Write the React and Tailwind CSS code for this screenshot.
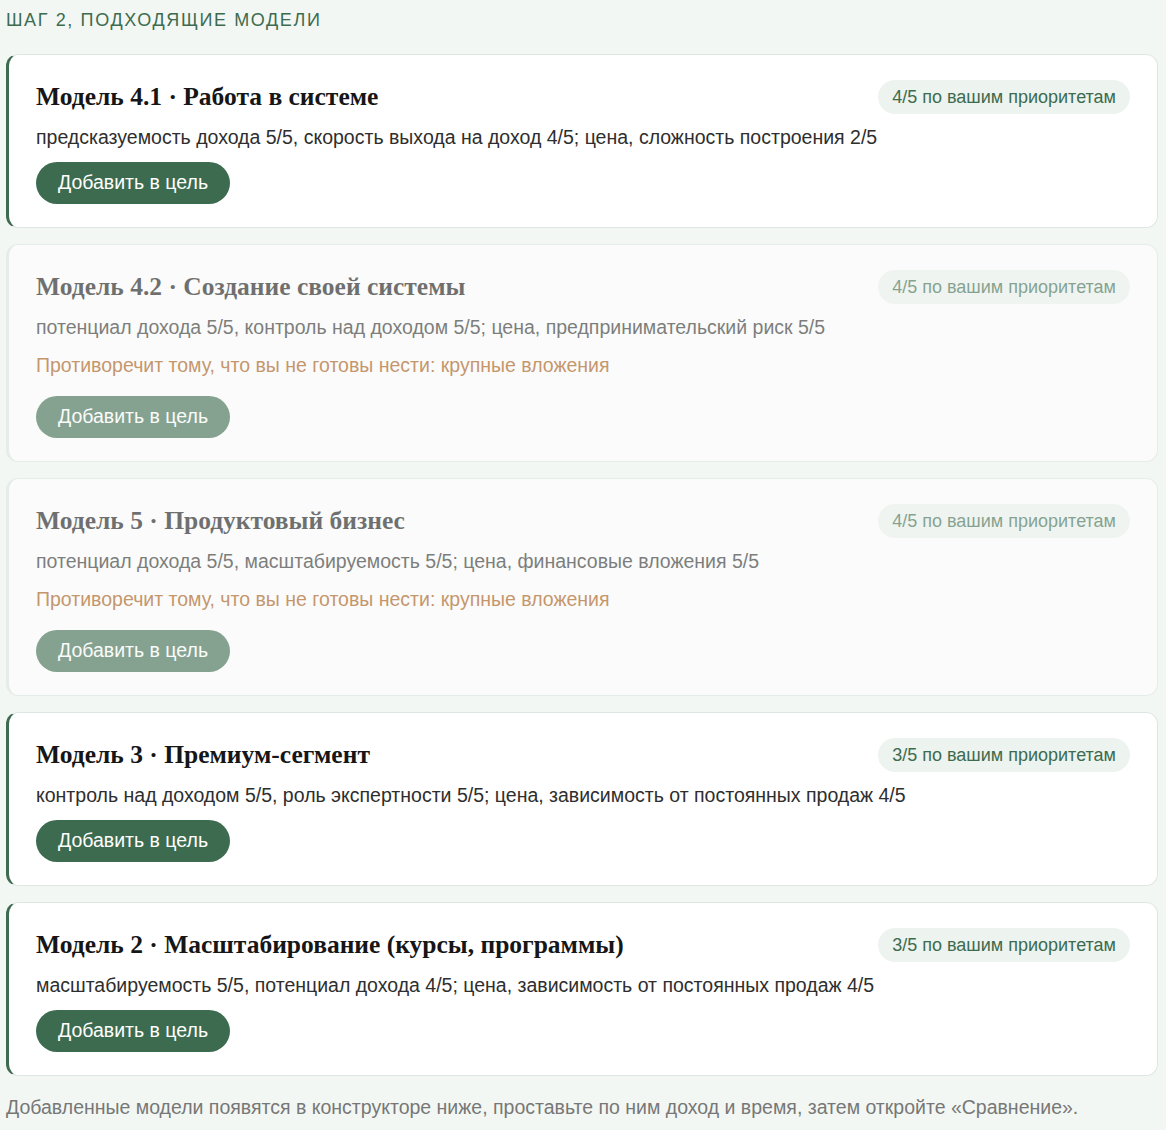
const models = [
  {
    id: '4.1',
    title: 'Модель 4.1 · Работа в системе',
    score: '4/5 по вашим приоритетам',
    summary:
      'предсказуемость дохода 5/5, скорость выхода на доход 4/5; цена, сложность построения 2/5',
  },
  {
    id: '4.2',
    title: 'Модель 4.2 · Создание своей системы',
    score: '4/5 по вашим приоритетам',
    summary:
      'потенциал дохода 5/5, контроль над доходом 5/5; цена, предпринимательский риск 5/5',
    conflict: 'Противоречит тому, что вы не готовы нести: крупные вложения',
  },
  {
    id: '5',
    title: 'Модель 5 · Продуктовый бизнес',
    score: '4/5 по вашим приоритетам',
    summary:
      'потенциал дохода 5/5, масштабируемость 5/5; цена, финансовые вложения 5/5',
    conflict: 'Противоречит тому, что вы не готовы нести: крупные вложения',
  },
  {
    id: '3',
    title: 'Модель 3 · Премиум-сегмент',
    score: '3/5 по вашим приоритетам',
    summary:
      'контроль над доходом 5/5, роль экспертности 5/5; цена, зависимость от постоянных продаж 4/5',
  },
  {
    id: '2',
    title: 'Модель 2 · Масштабирование (курсы, программы)',
    score: '3/5 по вашим приоритетам',
    summary:
      'масштабируемость 5/5, потенциал дохода 4/5; цена, зависимость от постоянных продаж 4/5',
  },
]

const ModelCard = ({ model }) => {
  const dimmed = Boolean(model.conflict)
  return (
    <div
      className={
        dimmed
          ? 'rounded-xl border border-l-[3px] border-[#dfe6e1] bg-white pl-[27px] pr-[27px] pt-[25px] pb-[23px] opacity-60'
          : 'rounded-xl border border-l-[3px] border-[#dfe6e1] border-l-[#3d6b4f] bg-white pl-[27px] pr-[27px] pt-[25px] pb-[23px]'
      }
    >
      <div className="flex h-[34px] items-center justify-between gap-4">
        <h3
          className="text-[25.5px] font-bold leading-[32px] text-[#161616]"
          style={{ fontFamily: '"Liberation Serif", "Times New Roman", serif' }}
        >
          {model.title}
        </h3>
        <span className="rounded-full bg-[#edf3ee] px-[14px] py-[6px] text-[18px] leading-[22px] text-[#3d6b4f]">
          {model.score}
        </span>
      </div>
      <p className="mt-[10px] text-[19.5px] leading-[26px] text-[#2e2e2e]">
        {model.summary}
      </p>
      {model.conflict && (
        <p className="mt-3 text-[19.5px] leading-[26px] text-[#a8560f]">
          {model.conflict}
        </p>
      )}
      <button
        type="button"
        className={`${dimmed ? 'mt-[18px]' : 'mt-3'} h-[42px] rounded-full bg-[#3d6b4f] px-[22px] text-[19.5px] text-white`}
      >
        Добавить в цель
      </button>
    </div>
  )
}

const App = () => {
  return (
    <div
      className="min-h-[1130px] bg-[#f3f7f4] pl-[6px] pr-[8px] pt-[9px]"
      style={{ fontFamily: '"Liberation Sans", Arial, sans-serif' }}
    >
      <div className="text-[18px] uppercase leading-[22px] tracking-[0.09em] text-[#3d6b4f]">
        Шаг 2, подходящие модели
      </div>
      <div className="mt-[23px] flex flex-col gap-4">
        {models.map((m) => (
          <ModelCard key={m.id} model={m} />
        ))}
      </div>
      <p className="mt-[18px] text-[19.5px] leading-[26px] text-[#777]">
        Добавленные модели появятся в конструкторе ниже, проставьте по ним доход и время, затем откройте «Сравнение».
      </p>
    </div>
  )
}

export default App
